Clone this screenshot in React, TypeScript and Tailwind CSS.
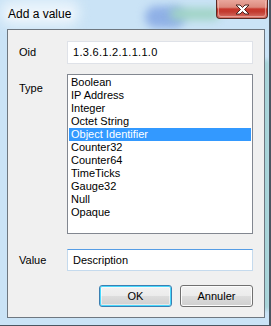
const items = [
  "Boolean",
  "IP Address",
  "Integer",
  "Octet String",
  "Object Identifier",
  "Counter32",
  "Counter64",
  "TimeTicks",
  "Gauge32",
  "Null",
  "Opaque",
];

function CloseButton() {
  return (
    <div className="relative w-[52px] h-[19px] rounded-b-[4px] border border-t-0 border-[#5a2a24] overflow-hidden bg-[linear-gradient(#e9a79c_0%,#dc8a7d_40%,#c7382c_50%,#c23a2f_65%,#d8766a_100%)]">
      <div className="absolute inset-[1px] rounded-b-[3px] border border-t-0 border-[#f2c5bd]/60" />
      <svg className="absolute left-[17px] top-[4px]" width="17" height="11" viewBox="0 0 17 11">
        <path
          d="M2 1 H6 L8.5 3.5 L11 1 H15 L10.5 5.5 L15 10 H11 L8.5 7.5 L6 10 H2 L6.5 5.5 Z"
          fill="#ffffff"
          stroke="#4a2520"
          strokeWidth="1"
          strokeLinejoin="round"
        />
      </svg>
    </div>
  );
}

export default function App() {
  return (
    <div
      className="relative w-[271px] h-[326px] overflow-hidden flex flex-col bg-[#cae3f6] border-r-2 border-b border-[#4b5560] text-[11px] text-black"
      style={{ fontFamily: '"Liberation Sans", Arial, sans-serif' }}
    >
      {/* blurred desktop behind the glass */}
      <div className="absolute left-[145px] top-[6px] w-[40px] h-[22px] rounded-full bg-[#8fb0e6] blur-[4px]" />
      <div className="absolute left-[170px] top-[8px] w-[50px] h-[12px] rounded-full bg-[#9fd3c4] blur-[4px]" />
      <div className="absolute left-[0px] top-[0px] w-[80px] h-[26px] rounded-full bg-[#e8f3fb] blur-[6px]" />
      <div className="absolute right-[0px] top-[60px] w-[6px] h-[250px] bg-[#9fcfcf] blur-[2px]" />

      <div className="relative flex items-start justify-between h-[29px] pl-2 pr-[1px]">
        <span
          className="mt-[7px] text-[12px] leading-[15px]"
          style={{ textShadow: "0 0 6px #ffffff, 0 0 8px #ffffff" }}
        >
          Add a value
        </span>
        <CloseButton />
      </div>

      <div className="relative ml-[7px] mr-[4px] h-[289px] border border-[#6e7780] bg-[#f0f0f0] px-[11px] pt-[11px]">
        <div className="flex items-center h-[23px]">
          <span className="w-[48px]">Oid</span>
          <div className="w-[186px] h-[23px] bg-white border border-[#dfe2e8] flex items-center pl-[5px] tracking-[0.3px]">
            1.3.6.1.2.1.1.1.0
          </div>
        </div>

        <div className="flex mt-[10px]">
          <span className="w-[48px] pt-[6px]">Type</span>
          <div className="w-[186px] h-[160px] bg-white border border-[#828790] p-[1px]">
            {items.map((it) => (
              <div
                key={it}
                className={
                  it === "Object Identifier"
                    ? "h-[13px] leading-[13px] pl-[2px] bg-[#3399ff] text-white"
                    : "h-[13px] leading-[13px] pl-[2px]"
                }
              >
                {it}
              </div>
            ))}
          </div>
        </div>

        <div className="flex items-center mt-[15px]">
          <span className="w-[48px]">Value</span>
          <div className="w-[186px] h-[22px] bg-white border border-[#c5daed] border-t-[#569de5] flex items-center pl-[5px]">
            Description
          </div>
        </div>

        <div className="flex justify-end gap-[8px] mt-[14px]">
          <button className="w-[73px] h-[22px] rounded-[3px] border border-[#3c7fb1] bg-[linear-gradient(#f2f2f2_0%,#ebebeb_50%,#dddddd_50%,#cfcfcf_100%)] shadow-[inset_0_0_0_1px_#48d8fd,inset_0_0_0_2px_#ffffff80]">
            OK
          </button>
          <button className="w-[73px] h-[22px] rounded-[3px] border border-[#707070] bg-[linear-gradient(#f2f2f2_0%,#ebebeb_50%,#dddddd_50%,#cfcfcf_100%)] shadow-[inset_0_0_0_1px_#fcfcfc]">
            Annuler
          </button>
        </div>
      </div>
    </div>
  );
}
